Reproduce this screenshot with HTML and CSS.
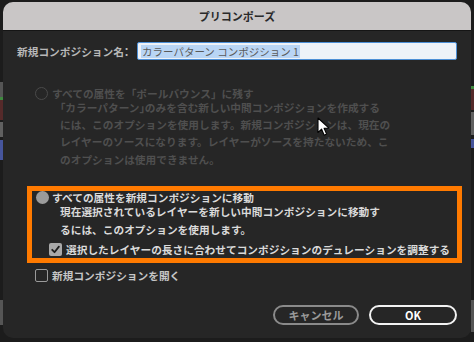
FILE: index.html
```html
<!DOCTYPE html>
<html lang="ja">
<head>
    <meta charset="UTF-8">
    <title>プリコンポーズ</title>
    <link rel="stylesheet" href="styles.css">
</head>
<body>

    <!-- Janela de diálogo -->
    <div class="dialog">
        <div class="titlebar">プリコンポーズ</div>

        <div class="content">
            <div class="name-row">
                <span class="name-label">新規コンポジション名<span class="half">：</span></span>
                <div class="name-input"><span class="sel">カラーパターン コンポジション 1</span></div>
            </div>

            <!-- Opção desativada -->
            <div class="option disabled">
                <div class="opt-head"><span class="radio"></span><span>すべての属性を「ポールバウンス」に残す</span></div>
                <div class="opt-desc">
                    <span class="line"><span class="half">「</span>カラーパターン<span class="half">」</span>のみを含む新しい中間コンポジションを作成する</span>
                    <span class="line">には、このオプションを使用します。新規コンポジションは、現在の</span>
                    <span class="line">レイヤーのソースになります。レイヤーがソースを持たないため、こ</span>
                    <span class="line">のオプションは使用できません。</span>
                </div>
            </div>

            <!-- Opção marcada (destaque laranja) -->
            <div class="highlight">
                <div class="opt-head"><span class="radio on"></span><span>すべての属性を新規コンポジションに移動</span></div>
                <div class="opt-desc">
                    <span class="line">現在選択されているレイヤーを新しい中間コンポジションに移動す</span>
                    <span class="line">るには、このオプションを使用します。</span>
                </div>
                <div class="check-row inner-check">
                    <span class="checkbox checked">
                        <svg width="13" height="13" viewBox="0 0 13 13"><path d="M3.2 6.8 L5.5 9.2 L9.9 3.6" fill="none" stroke="#1e1e1e" stroke-width="1.8" stroke-linecap="round" stroke-linejoin="round"/></svg>
                    </span>
                    <span>選択したレイヤーの長さに合わせてコンポジションのデュレーションを調整する</span>
                </div>
            </div>

            <div class="check-row open-row">
                <span class="checkbox"></span>
                <span>新規コンポジションを開く</span>
            </div>

            <div class="buttons">
                <button class="btn cancel">キャンセル</button>
                <button class="btn ok">OK</button>
            </div>
        </div>
    </div>

    <!-- Cursor do mouse -->
    <svg class="cursor" width="14" height="20" viewBox="0 0 14 20">
        <path d="M1 1 L1 15.5 L4.6 12.2 L7.2 18.2 L9.6 17.1 L7.1 11.3 L12 11.1 Z" fill="#ffffff" stroke="#000000" stroke-width="1.1" stroke-linejoin="round"/>
    </svg>

</body>
</html>
```

FILE: styles.css
```css
body {
    font-family: "Noto Sans CJK JP", "Noto Sans", sans-serif;
    background-color: #1c1c1c;
    background-image:
        linear-gradient(to bottom, transparent 82px, #555 82px, #555 97px, #3f8a3f 97px, #3f8a3f 100px, #552a2a 100px, #552a2a 120px, transparent 120px, transparent 122px, #606060 122px, #606060 137px, transparent 137px, transparent 140px, #46559c 140px, #46559c 160px, transparent 160px, transparent 300px, #555 300px, #555 325px, transparent 325px),
        linear-gradient(to bottom, transparent 86px, #3f8a3f 86px, #3f8a3f 89px, #552a2a 89px, #552a2a 110px, transparent 110px, transparent 112px, #606060 112px, #606060 135px, transparent 135px, transparent 139px, #46559c 139px, #46559c 148px, transparent 148px, transparent 300px, #555 300px, #555 332px, transparent 332px);
    background-size: 3px 100%, 3px 100%;
    background-position: left top, right top;
    background-repeat: no-repeat;
    margin: 0;
    padding: 0;
    width: 474px;
    height: 342px;
    overflow: hidden;
    position: relative;
}

/* Janela */
.dialog {
    margin: 2px 3px 0 3px;
    width: 468px;
    height: 336px;
    background: #262626;
    border-radius: 10px;
    overflow: hidden;
}

.titlebar {
    height: 28px;
    line-height: 28px;
    background: #c9c6c6;
    color: #2a2a2a;
    font-size: 11px;
    font-weight: bold;
    text-align: center;
    border-bottom: 1px solid #151515;
}

.content {
    padding: 11px 14px 0 14px;
    color: #d6d6d6;
    font-size: 10.7px;
    font-weight: bold;
}

.half {
    font-feature-settings: "halt";
}

/* Nome da composição */
.name-row {
    display: flex;
    align-items: center;
    height: 18px;
}

.name-label {
    color: #b8b8b8;
    white-space: nowrap;
}

.name-input {
    margin-left: auto;
    width: 320px;
    height: 18px;
    box-sizing: border-box;
    background: #eef2f8;
    border: 1.5px solid #4d8fd6;
    border-radius: 2px;
    padding: 0 3px;
    display: flex;
    align-items: center;
}

.name-input .sel {
    background: #b9d5f5;
    color: #5a5a5a;
    font-weight: normal;
    font-size: 10.5px;
    line-height: 13px;
    padding: 0 1px;
}

/* Opções */
.opt-head {
    display: flex;
    align-items: center;
    gap: 4px;
    height: 11px;
    line-height: 11px;
    white-space: nowrap;
}

.opt-desc .line {
    display: block;
    white-space: nowrap;
}

.radio {
    width: 13px;
    height: 13px;
    box-sizing: border-box;
    border-radius: 50%;
    border: 1.5px solid #4a4a4a;
    flex-shrink: 0;
}

.radio.on {
    border: none;
    background: #9b9b9b;
}

.option.disabled {
    margin-top: 28px;
    padding-left: 18px;
    color: #4f4f4f;
}

.option.disabled .opt-desc {
    margin-left: 25px;
    line-height: 17.2px;
}

/* Destaque laranja */
.highlight {
    margin-top: 18px;
    margin-left: 10px;
    width: 435px;
    box-sizing: border-box;
    border: 5px solid #ff7a00;
    padding: 2px 0 1px 4px;
    color: #dadada;
}

.highlight .opt-head {
    gap: 3px;
    height: 10px;
    line-height: 10px;
}

.highlight .opt-desc {
    margin-left: 24px;
    margin-top: 1px;
    line-height: 15px;
}

.highlight .line + .line {
    margin-top: 3px;
}

.check-row {
    display: flex;
    align-items: center;
    gap: 4px;
    line-height: 14px;
    white-space: nowrap;
}

.inner-check {
    margin-top: 6px;
    margin-left: 13px;
}

.open-row {
    margin-top: 6px;
    margin-left: 18px;
    color: #c6c6c6;
}

.checkbox {
    width: 13px;
    height: 13px;
    box-sizing: border-box;
    border: 1.5px solid #9a9a9a;
    border-radius: 2px;
    flex-shrink: 0;
}

.checkbox.checked {
    border: none;
    background: #a9a9a9;
}

.checkbox svg {
    display: block;
}

/* Botões */
.buttons {
    display: flex;
    justify-content: flex-end;
    gap: 10px;
    margin-top: 22px;
}

.btn {
    height: 20px;
    border-radius: 10px;
    background: transparent;
    font-family: inherit;
    font-size: 11px;
    font-weight: bold;
    padding: 0;
    box-sizing: border-box;
}

.btn.cancel {
    width: 86px;
    border: 2px solid #8a8a8a;
    color: #9a9a9a;
}

.btn.ok {
    width: 88px;
    border: 2px solid #f2f2f2;
    color: #ffffff;
}

/* Cursor */
.cursor {
    position: absolute;
    left: 317px;
    top: 117px;
}
```
